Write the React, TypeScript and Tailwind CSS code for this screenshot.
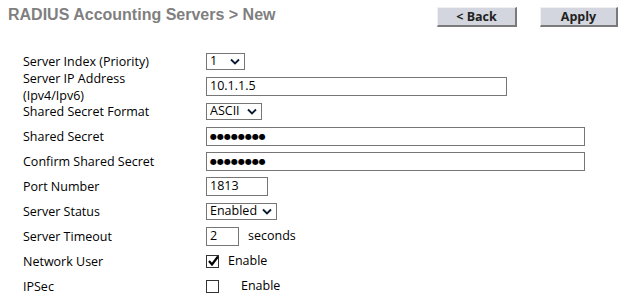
import React from "react";

const font = { fontFamily: '"Open Sans", "DejaVu Sans", Verdana, sans-serif' };

function Chevron() {
  return (
    <svg width="10" height="7" viewBox="0 0 10 7" className="shrink-0">
      <path d="M1 1.5 L5 5.5 L9 1.5" fill="none" stroke="#0b1a33" strokeWidth="1.8" />
    </svg>
  );
}

function SelectBox({ value, width }: { value: string; width: string }) {
  return (
    <div className={`flex h-[17px] items-center justify-between border border-[#767676] bg-white pl-[3px] pr-[4px] ${width}`}>
      <span className="text-[12.5px] leading-none text-black">{value}</span>
      <Chevron />
    </div>
  );
}

function TextBox({ value, width, secret }: { value: string; width: string; secret?: boolean }) {
  return (
    <div className={`flex h-[19px] items-center border border-[#767676] bg-white px-[3px] ${width}`}>
      {secret ? (
        <span
          className="text-[8px] leading-none tracking-[0px] text-black"
          style={{ fontFamily: '"DejaVu Sans", sans-serif' }}
        >
          ●●●●●●●●
        </span>
      ) : (
        <span className="text-[12.5px] leading-none text-black">{value}</span>
      )}
    </div>
  );
}

function Check({ checked }: { checked?: boolean }) {
  return (
    <div className="relative h-[13px] w-[13px] border border-[#333] bg-white">
      {checked && (
        <svg width="13" height="12" viewBox="0 0 13 12" className="absolute left-[0px] top-[-1px]">
          <path d="M2 6 L5 9.5 L11 1.5" fill="none" stroke="#000" strokeWidth="2.2" />
        </svg>
      )}
    </div>
  );
}

function Row({ label, children }: { label: React.ReactNode; children: React.ReactNode }) {
  return (
    <div className="flex h-[25px] items-center">
      <div className="w-[183px] text-[12.5px] leading-[17px] text-black">{label}</div>
      <div className="flex items-center">{children}</div>
    </div>
  );
}

function Btn({ children, width }: { children: React.ReactNode; width: string }) {
  return (
    <button
      className={`h-[20px] border-t border-l border-t-[#f0f0f0] border-l-[#f0f0f0] border-r-2 border-b-2 border-r-[#7a7a7a] border-b-[#7a7a7a] bg-[#d3d6de] text-[12.5px] font-bold text-[#222] ${width}`}
      style={font}
    >
      {children}
    </button>
  );
}

export default function App() {
  return (
    <div className="h-[305px] w-[630px] bg-white" style={font}>
      <div className="flex items-start justify-between pl-[8px] pr-[12px] pt-[5px]">
        <h1
          className="text-[16px] font-bold leading-[20px] text-[#7f7f7f]"
          style={{ fontFamily: '"Liberation Sans", Arial, sans-serif' }}
        >
          RADIUS Accounting Servers &gt; New
        </h1>
        <div className="flex gap-[23px] pt-[2px]">
          <Btn width="w-[80px]">&lt; Back</Btn>
          <Btn width="w-[78px]">Apply</Btn>
        </div>
      </div>

      <div className="mt-[22px] pl-[23px]">
        <Row label="Server Index (Priority)">
          <SelectBox value="1" width="w-[39px]" />
        </Row>
        <Row label={<>Server IP Address<br />(Ipv4/Ipv6)</>}>
          <TextBox value="10.1.1.5" width="w-[301px]" />
        </Row>
        <Row label="Shared Secret Format">
          <SelectBox value="ASCII" width="w-[56px]" />
        </Row>
        <Row label="Shared Secret">
          <TextBox value="" secret width="w-[379px]" />
        </Row>
        <Row label="Confirm Shared Secret">
          <TextBox value="" secret width="w-[379px]" />
        </Row>
        <Row label="Port Number">
          <TextBox value="1813" width="w-[62px]" />
        </Row>
        <Row label="Server Status">
          <SelectBox value="Enabled" width="w-[71px]" />
        </Row>
        <Row label="Server Timeout">
          <TextBox value="2" width="w-[33px]" />
          <span className="ml-[9px] text-[12.5px] text-black">seconds</span>
        </Row>
        <Row label="Network User">
          <Check checked />
          <span className="ml-[9px] text-[12.5px] text-black">Enable</span>
        </Row>
        <Row label="IPSec">
          <Check />
          <span className="ml-[22px] text-[12.5px] text-black">Enable</span>
        </Row>
      </div>
    </div>
  );
}
